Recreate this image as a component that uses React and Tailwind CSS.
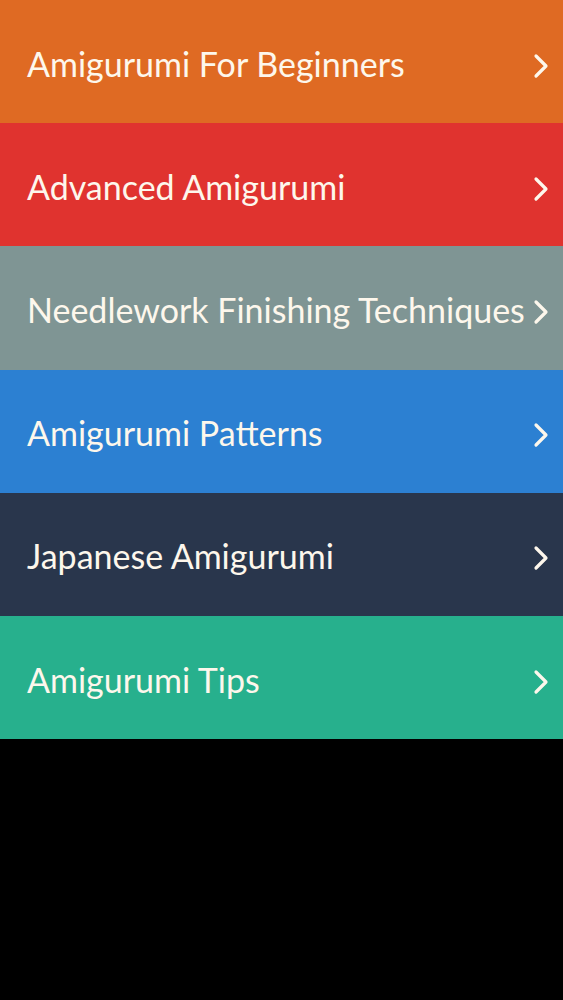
const items = [
  { label: 'Amigurumi For Beginners', bg: 'bg-[#df6a23]' },
  { label: 'Advanced Amigurumi', bg: 'bg-[#e0332f]' },
  { label: 'Needlework Finishing Techniques', bg: 'bg-[#7f9594]' },
  { label: 'Amigurumi Patterns', bg: 'bg-[#2c80d2]' },
  { label: 'Japanese Amigurumi', bg: 'bg-[#29364c]' },
  { label: 'Amigurumi Tips', bg: 'bg-[#27b08d]' },
]

function Chevron() {
  return (
    <svg width="20" height="26" viewBox="0 0 20 26" fill="none" className="shrink-0 mt-[8px]">
      <path d="M5 3 L15 13 L5 23" stroke="#fdf7ec" strokeWidth="3.2" strokeLinecap="round" strokeLinejoin="round" />
    </svg>
  )
}

export default function App() {
  return (
    <div className="w-[563px] h-[1000px] bg-black flex flex-col" style={{ fontFamily: 'Lato, "Open Sans", sans-serif' }}>
      {items.map((item) => (
        <div key={item.label} className={`h-[123.2px] shrink-0 flex items-center justify-between pl-[27px] pr-[12px] ${item.bg}`}>
          <span className="text-[#fdf7ec] text-[34px] leading-none whitespace-nowrap pt-[4px]">{item.label}</span>
          <Chevron />
        </div>
      ))}
    </div>
  )
}
